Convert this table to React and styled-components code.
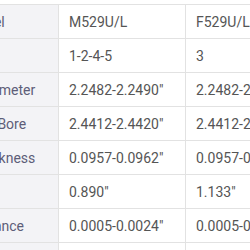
import React from 'react';
import styled, { createGlobalStyle } from 'styled-components';

const GlobalStyle = createGlobalStyle`
  body {
    margin: 0;
    background: #fff;
    font-family: Roboto, "Liberation Sans", sans-serif;
    overflow: hidden;
  }
`;

const Wrapper = styled.div`
  width: 250px;
  height: 250px;
  overflow: hidden;
  padding-top: 4px;
  box-sizing: border-box;
`;

const SpecTable = styled.table`
  border-collapse: collapse;
  margin-left: -69px;
  width: 381px;
  table-layout: fixed;
  font-size: 14px;
`;

const Column = styled.col`
  width: 127px;
`;

const Label = styled.th`
  height: 33px;
  padding: 0 10px;
  text-align: left;
  font-weight: 400;
  color: #5d5d78;
  background: #f3f3f6;
  border: 1px solid #e2e2e2;
  white-space: nowrap;
  overflow: hidden;
`;

const Value = styled.td`
  height: 33px;
  padding: 0 10px;
  color: #555;
  background: #fff;
  border: 1px solid #e2e2e2;
  white-space: nowrap;
  overflow: hidden;
`;

const specs = [
  ['Set Model', 'M529U/L', 'F529U/L'],
  ['Position', '1-2-4-5', '3'],
  ['Shaft Diameter', '2.2482-2.2490"', '2.2482-2.2490"'],
  ['Housing Bore', '2.4412-2.4420"', '2.4412-2.4420"'],
  ['Wall Thickness', '0.0957-0.0962"', '0.0957-0.0962"'],
  ['Width', '0.890"', '1.133"'],
  ['Oil Clearance', '0.0005-0.0024"', '0.0005-0.0024"'],
  ['Oil Hole', 'Yes', 'Yes'],
];

const App = () => (
  <Wrapper>
    <GlobalStyle />
    <SpecTable>
      <colgroup>
        <Column />
        <Column />
        <Column />
      </colgroup>
      <tbody>
        {specs.map(([label, a, b]) => (
          <tr key={label}>
            <Label>{label}</Label>
            <Value>{a}</Value>
            <Value>{b}</Value>
          </tr>
        ))}
      </tbody>
    </SpecTable>
  </Wrapper>
);

export default App;
